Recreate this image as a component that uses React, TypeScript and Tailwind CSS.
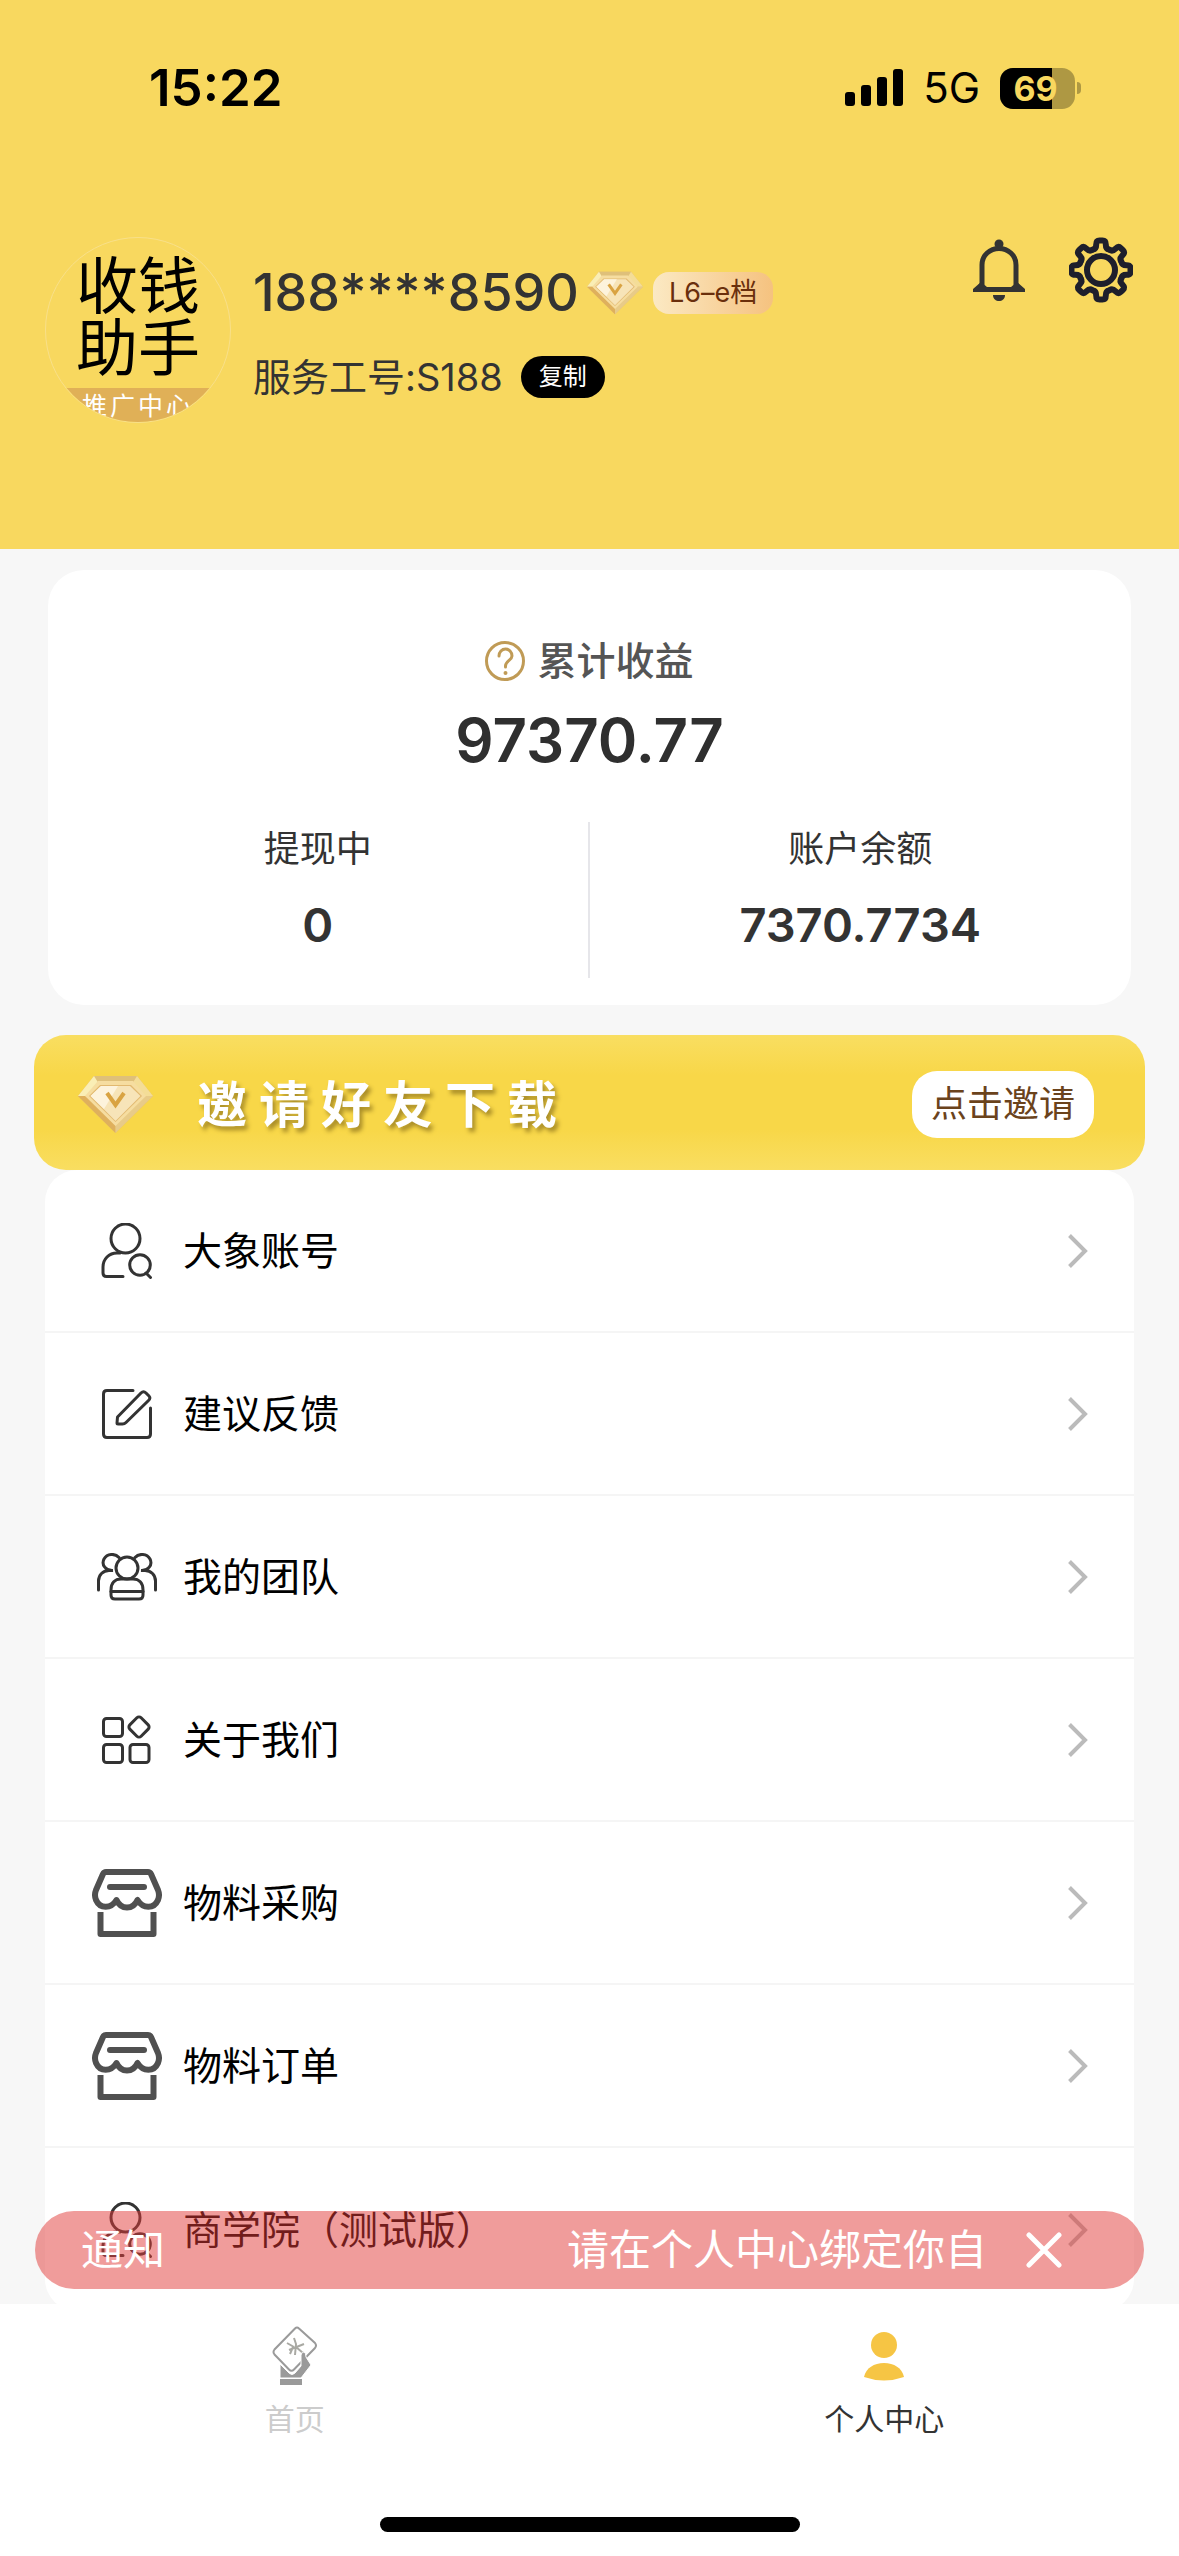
import type { ReactNode } from 'react'

const teeth = [0, 45, 90, 135, 180, 225, 270, 315]

function DiamondIcon({ className }: { className?: string }) {
  return (
    <svg className={className} viewBox="0 0 75 57" fill="none">
      <path d="M16 0H59L75 20L37.5 57L0 20Z" fill="#e3bf72" />
      <path d="M16 0H59L54 8H21Z" fill="#dfc07a" />
      <path d="M16 0L21 8L9 20L0 20Z" fill="#faeeb5" />
      <path d="M59 0L54 8L66 20L75 20Z" fill="#f4dd97" />
      <path d="M0 20H9L37.5 48V57Z" fill="#dfb05c" />
      <path d="M75 20H66L37.5 48V57Z" fill="#e8cb88" />
      <path d="M20 5H55L68 20L37.5 50L7 20Z" fill="#f6dda0" />
      <path d="M22 9H53L64 20L37.5 46L11 20Z" fill="#e2b970" />
      <path d="M23 10H52L62.500 20L37.500 45L12.500 20Z" fill="#f7e4b8" />
      <path d="M23 10H40L26 33L12.500 20Z" fill="#fdf3dc" />
      <path d="M29 17L37.500 29L46 17" stroke="#d9a342" strokeWidth="4" />
    </svg>
  )
}

function BellIcon() {
  return (
    <svg className="w-[52px] h-[62px]" viewBox="0 0 52 62" fill="none">
      <circle cx="26" cy="5" r="4.500" fill="#333333" />
      <path
        d="M6 50L9 45V26C9 16 17 9.500 26 9.500S43 16 43 26V45L46 50"
        stroke="#333333"
        strokeWidth="5"
      />
      <path d="M0 53V50L8 43L14 48H38L44 43L52 50V53Z" fill="#333333" />
      <path d="M20 56H32C32 60 29 62 26 62S20 60 20 56Z" fill="#333333" />
    </svg>
  )
}

function GearIcon() {
  return (
    <svg className="w-[64px] h-[66px]" viewBox="-32 -33 64 66" fill="none" stroke="#1e1f2c">
      <circle r="14" strokeWidth="6" />
      {teeth.map((angle) => (
        <path
          key={angle}
          transform={`rotate(${angle})`}
          d="M-8 -20.500Q-4.800 -21 -4.800 -25.500Q-4.800 -29.500 -1.500 -29.500H1.500Q4.800 -29.500 4.800 -25.500Q4.800 -21 8 -20.500"
          strokeWidth="6"
          strokeLinecap="round"
        />
      ))}
    </svg>
  )
}

function AccountIcon() {
  return (
    <svg className="w-[52px] h-[56px]" viewBox="0 0 52 56" fill="none" stroke="#333333" strokeWidth="3" strokeLinecap="round">
      <circle cx="24.500" cy="15.500" r="14.500" />
      <path d="M19 30H16C8 30 2 36 2 44V50Q2 53.500 5.500 53.500H22" />
      <circle cx="39" cy="42" r="10.300" />
      <path d="M45 50L49.500 54.500" />
    </svg>
  )
}

function FeedbackIcon() {
  return (
    <svg className="w-[50px] h-[50px]" viewBox="0 0 50 50" fill="none" stroke="#333333" strokeWidth="3" strokeLinecap="round" strokeLinejoin="round">
      <path d="M31 1.500H5Q1.500 1.500 1.500 5V45Q1.500 48.500 5 48.500H45Q48.500 48.500 48.500 45V19" />
      <path d="M15.500 28L39 4Q41.500 1.500 44 4L47 7Q49 9 46.500 11.500L24 33.500Q22.500 35 20.500 35H16Q15 35 15 34Z" />
    </svg>
  )
}

function TeamIcon() {
  return (
    <svg className="w-[60px] h-[48px]" viewBox="0 0 60 48" fill="none" stroke="#333333" strokeWidth="3" strokeLinecap="round">
      <circle cx="30" cy="15" r="11" />
      <path d="M14 42V37C14 30 18 26 24 26H36C42 26 46 30 46 37V42Q46 46 42 46H18Q14 46 14 42Z" />
      <path d="M14 38.500H46" />
      <path d="M22 4.500C18 0 10 0.500 7 6C4 12 9 18 16 17.500H12C6 17.500 1.500 22 1.500 28V37" />
      <path d="M38 4.500C42 0 50 0.500 53 6C56 12 51 18 44 17.500H48C54 17.500 58.500 22 58.500 28V37" />
    </svg>
  )
}

function AboutIcon() {
  return (
    <svg className="w-[50px] h-[50px]" viewBox="0 0 50 50" fill="none" stroke="#333333" strokeWidth="3">
      <rect x="1.500" y="3.500" width="19" height="18" rx="3" />
      <rect x="1.500" y="29.500" width="19" height="18" rx="3" />
      <rect x="28" y="29.500" width="19" height="18" rx="3" />
      <rect x="29" y="4" width="16" height="16" rx="3" transform="rotate(45 37 12)" />
    </svg>
  )
}

function ShopIcon() {
  return (
    <svg className="w-[70px] h-[68px]" viewBox="0 0 70 68" fill="none" stroke="#505050" strokeWidth="6" strokeLinejoin="round">
      <path d="M14 3H56Q58 3 59 5L66 21Q68 26 66 31C62 40 51 40 45.500 31C41 41 29 41 24.500 31C19 40 8 40 4 31Q2 26 4 21L11 5Q12 3 14 3Z" />
      <path d="M18 18H52" strokeLinecap="round" />
      <path d="M8.500 43V65H61.500V43" />
    </svg>
  )
}

function PayIcon() {
  return (
    <svg className="w-[46px] h-[60px]" viewBox="0 0 46 60" fill="none">
      <path
        d="M23 2.500Q25 0.500 27 2.500L43 17Q45 19.500 43 22L22 43.500Q19.500 46 17 43.500L2.500 28.500Q0.500 26 2.500 23.500Z"
        stroke="#9a9a9a"
        strokeWidth="2"
      />
      <path
        d="M22 12L24 18L23 29M15 17L22 21M32 18L17 24M21 21L18 28M24 21L31 27"
        stroke="#a9a9a3"
        strokeWidth="2"
      />
      <path
        d="M8 38L17 47Q20 50 23 47L29 40V29Q30 25 32 26Q34 27 34 31L39 39L29 52H8Z"
        fill="#9a9a9a"
        stroke="#ffffff"
        strokeWidth="1"
      />
      <rect x="8" y="53" width="22" height="6" fill="#9a9a9a" />
    </svg>
  )
}

function ProfileIcon() {
  return (
    <svg className="w-[42px] h-[60px]" viewBox="0 0 42 60" fill="#f6c544">
      <circle cx="21" cy="19" r="13" />
      <path d="M1 51C3 42 11 37 21 37S39 42 41 51Q31 54.500 21 54.500T1 51Z" />
    </svg>
  )
}

function ChevronIcon() {
  return (
    <svg className="w-5 h-[34px]" viewBox="0 0 20 34" fill="none" stroke="#bbbbbb" strokeWidth="4">
      <path d="M1.500 1.500L17 17L1.500 32.500" />
    </svg>
  )
}

const menuItems: { label: string; icon: ReactNode }[] = [
  { label: '大象账号', icon: <AccountIcon /> },
  { label: '建议反馈', icon: <FeedbackIcon /> },
  { label: '我的团队', icon: <TeamIcon /> },
  { label: '关于我们', icon: <AboutIcon /> },
  { label: '物料采购', icon: <ShopIcon /> },
  { label: '物料订单', icon: <ShopIcon /> },
  { label: '商学院（测试版）', icon: <AccountIcon /> },
]

const balances = [
  { label: '提现中', value: '0' },
  { label: '账户余额', value: '7370.7734' },
]

function StatusBar() {
  return (
    <div className="flex items-center justify-between h-[176px] pl-[149px] pr-[98px] text-black">
      <span className="text-[51px] leading-[60px] font-semibold">15:22</span>
      <div className="flex items-center">
        <svg className="w-[58px] h-[38px]" viewBox="0 0 58 38">
          <rect x="0" y="23" width="10" height="14" rx="3" />
          <rect x="16" y="16" width="10" height="21" rx="3" />
          <rect x="32" y="8" width="10" height="29" rx="3" />
          <rect x="48" y="0" width="10" height="37" rx="3" />
        </svg>
        <span className="ml-5 text-[42px] leading-[60px]">5G</span>
        <div className="ml-5 flex items-center gap-[2px]">
          <div className="relative w-[75px] h-[41px] rounded-[13px] overflow-hidden bg-[#ae9843]">
            <div className="w-[52px] h-full bg-black" />
            <span className="absolute inset-y-0 left-0 w-[71px] text-center text-[34px] leading-[41px] font-bold text-[#f8d85f]">69</span>
          </div>
          <div className="w-1 h-3 rounded-r-full bg-[#ae9843]" />
        </div>
      </div>
    </div>
  )
}

export default function App() {
  return (
    <div className="flex flex-col h-screen bg-[#f7f7f7] text-[#333333] font-['Inter','Noto_Sans_CJK_SC',sans-serif]">
      <div className="relative flex-1 min-h-0">
        <main className="h-full overflow-y-auto [scrollbar-width:none]">
          {/* 顶部用户信息 */}
          <header className="bg-[#f8d85f]">
            <StatusBar />
            <div className="flex items-start pt-[61px] pb-[126px] pl-[45px] pr-[46px]">
              <div className="flex flex-col shrink-0 size-[186px] rounded-full overflow-hidden border border-[#f9e08a] text-center">
                <div className="shrink-0 pt-[18px] h-[150px] text-[62px] leading-[62px] text-black">
                  收钱
                  <br />
                  助手
                </div>
                <div className="shrink-0 h-9 bg-[#e0b057] text-[25px] leading-9 tracking-[3px] text-white">推广中心</div>
              </div>
              <div className="flex flex-col gap-6 pt-6 pl-[22px]">
                <div className="flex items-center h-16">
                  <h1 className="text-[52px] leading-[64px] font-medium">188****8590</h1>
                  <DiamondIcon className="ml-2 w-14 h-[44px]" />
                  <span className="ml-[10px] h-[42px] px-4 rounded-2xl bg-linear-to-r from-[#fbe9c3] to-[#f5c27f] text-[27px] leading-[42px] text-[#6a2f0c]">
                    L6–e档
                  </span>
                </div>
                <div className="flex items-center h-14">
                  <span className="text-[38px] leading-[56px]">服务工号:S188</span>
                  <button className="ml-[18px] w-[84px] h-[42px] rounded-full bg-black text-2xl leading-[42px] text-white">
                    复制
                  </button>
                </div>
              </div>
              <div className="ml-auto flex items-center gap-11">
                <button aria-label="消息">
                  <BellIcon />
                </button>
                <button aria-label="设置">
                  <GearIcon />
                </button>
              </div>
            </div>
          </header>

          {/* 收益 */}
          <section className="mt-[21px] mx-12 pt-16 pb-[27px] rounded-[36px] bg-white text-center">
            <div className="flex items-center justify-center gap-3">
              <svg className="size-10" viewBox="0 0 40 40" fill="none" stroke="#c09b56" strokeWidth="3" strokeLinecap="round">
                <circle cx="20" cy="20" r="18.500" />
                <path d="M14 15C14 11 17 8 20.500 8S27 11 27 15C27 19 20.500 20 20.500 25V26" />
                <circle cx="20.500" cy="32" r="1" fill="#c09b56" strokeWidth="2" />
              </svg>
              <h2 className="text-[39px] leading-[54px] font-medium text-[#555555]">累计收益</h2>
            </div>
            <p className="mt-4 text-[60px] leading-[72px] font-semibold text-[#2f2f2f]">97370.77</p>
            <div className="mt-[46px] grid grid-cols-2 divide-x-2 divide-[#e6e6ea]">
              {balances.map((item) => (
                <div key={item.label} className="flex flex-col gap-6 pt-[3px] pb-[25px]">
                  <span className="text-4xl leading-[48px]">{item.label}</span>
                  <span className="text-[47px] leading-[56px] font-semibold">{item.value}</span>
                </div>
              ))}
            </div>
          </section>

          {/* 邀请横幅 */}
          <section className="mt-[30px] mx-[34px] flex items-center h-[135px] pt-1 pl-11 pr-[51px] rounded-[32px] bg-[linear-gradient(to_bottom,#f9de61,#f8d748_30%,#f8d748_70%,#f9de61)]">
            <DiamondIcon className="w-[75px] h-[57px]" />
            <h2 className="ml-11 text-[50px] leading-[64px] font-bold tracking-[12px] text-white [text-shadow:3px_4px_4px_#a98d28]">
              邀请好友下载
            </h2>
            <button className="ml-auto h-[67px] px-[19px] rounded-[25px] bg-white text-4xl leading-[67px] text-[#6b431c]">
              点击邀请
            </button>
          </section>

          {/* 菜单列表 */}
          <nav className="mx-[45px] rounded-[32px] bg-white">
            {menuItems.map((item) => (
              <a
                key={item.label}
                href="#"
                className="flex items-center gap-[21px] h-[163px] pl-[47px] pr-[46px] border-b-2 border-[#f5f5f5] last:border-b-0"
              >
                <span className="flex justify-center w-[70px]">{item.icon}</span>
                <span className="flex-1 text-[39px] leading-[54px] text-black">{item.label}</span>
                <ChevronIcon />
              </a>
            ))}
          </nav>
        </main>

        {/* 通知条 */}
        <div className="absolute inset-x-[35px] bottom-[15px] flex items-center h-[78px] pl-[46px] pr-[82px] rounded-full bg-[#e23a38]/50 text-[42px] leading-[60px] text-white">
          <span>通知</span>
          <span className="ml-auto">请在个人中心绑定你自</span>
          <button aria-label="关闭" className="ml-[39px]">
            <svg className="size-9" viewBox="0 0 36 36" fill="none" stroke="currentColor" strokeWidth="5" strokeLinecap="round">
              <path d="M3 3L33 33M33 3L3 33" />
            </svg>
          </button>
        </div>
      </div>

      {/* 底部标签栏 */}
      <footer className="flex flex-col bg-white">
        <nav className="grid grid-cols-2 pt-[22px] text-[30px] leading-10">
          <a href="#" className="flex flex-col items-center gap-[13px] text-[#cccccc]">
            <PayIcon />
            首页
          </a>
          <a href="#" className="flex flex-col items-center gap-[13px]">
            <ProfileIcon />
            个人中心
          </a>
        </nav>
        <div className="mt-[78px] mb-6 mx-auto w-[420px] h-[15px] rounded-full bg-black" />
      </footer>
    </div>
  )
}
